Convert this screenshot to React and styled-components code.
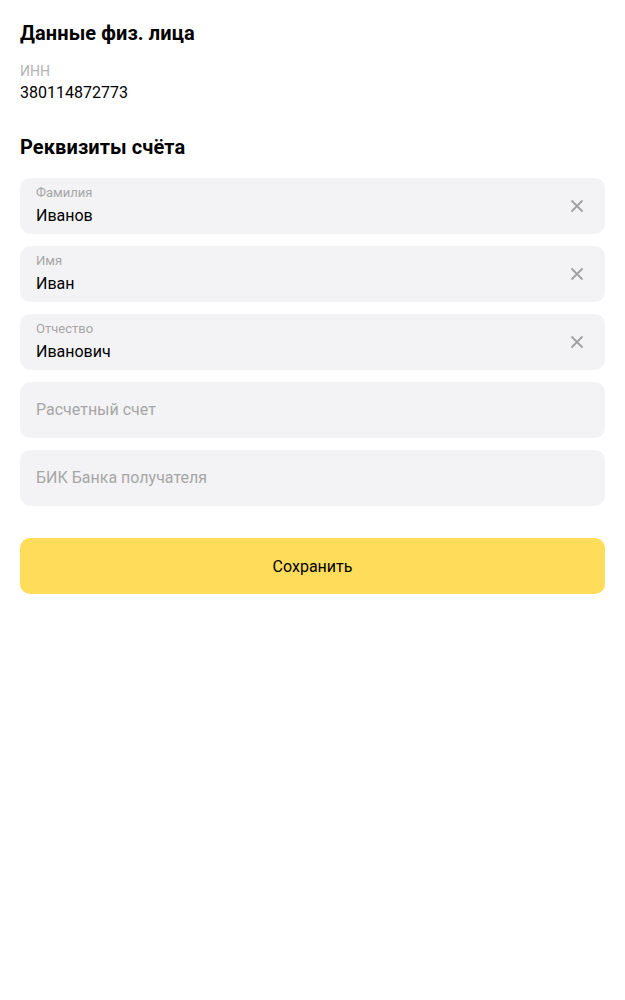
import React from "react";
import styled, { createGlobalStyle } from "styled-components";

const Global = createGlobalStyle`
  html, body { margin: 0; padding: 0; background: #fff; }
  body { font-family: Roboto, "Noto Sans", sans-serif; color: #000; }
  * { box-sizing: border-box; }
`;

const Page = styled.div`
  padding: 18px 20px 20px;
  display: flex;
  flex-direction: column;
`;

const Title = styled.h2`
  margin: 0;
  font-size: 20px;
  line-height: 30px;
  font-weight: 700;
  letter-spacing: 0.1px;
`;

const InfoBlock = styled.div`
  display: flex;
  flex-direction: column;
  margin-top: 14px;
  margin-bottom: 28px;
`;

const InfoLabel = styled.span`
  font-size: 14px;
  line-height: 18px;
  color: #b3b3b3;
`;

const InfoValue = styled.span`
  font-size: 16px;
  line-height: 22px;
  margin-top: 2px;
  color: #000;
`;

const Fields = styled.div`
  display: flex;
  flex-direction: column;
  gap: 12px;
  margin-top: 16px;
`;

const Field = styled.div`
  height: 56px;
  background: #f3f3f5;
  border-radius: 10px;
  display: flex;
  align-items: center;
  padding: 0 16px;
`;

const FieldBody = styled.div`
  flex: 1;
  display: flex;
  flex-direction: column;
`;

const FieldLabel = styled.span`
  font-size: 13px;
  line-height: 14px;
  color: #a6a6a6;
`;

const FieldValue = styled.span`
  font-size: 16px;
  line-height: 22px;
  margin-top: 5px;
  color: #000;
`;

const Placeholder = styled.span`
  font-size: 16px;
  line-height: 22px;
  color: #a6a6a6;
`;

const Clear = styled.button`
  border: 0;
  background: none;
  padding: 0;
  width: 24px;
  height: 24px;
  display: flex;
  align-items: center;
  justify-content: center;
  cursor: pointer;
`;

const SaveButton = styled.button`
  margin-top: 32px;
  height: 56px;
  border: 0;
  border-radius: 10px;
  background: #ffdd5b;
  font-family: inherit;
  font-size: 16px;
  color: #000;
  cursor: pointer;
`;

const X = () => (
  <svg width="14" height="14" viewBox="0 0 14 14">
    <path d="M1.5 1.5 L12.5 12.5 M12.5 1.5 L1.5 12.5" stroke="#a0a0a0" strokeWidth="1.8" strokeLinecap="butt" />
  </svg>
);

const filled = [
  { label: "Фамилия", value: "Иванов" },
  { label: "Имя", value: "Иван" },
  { label: "Отчество", value: "Иванович" },
];

const empty = ["Расчетный счет", "БИК Банка получателя"];

export default function App() {
  return (
    <>
      <Global />
      <Page>
        <Title>Данные физ. лица</Title>
        <InfoBlock>
          <InfoLabel>ИНН</InfoLabel>
          <InfoValue>380114872773</InfoValue>
        </InfoBlock>
        <Title>Реквизиты счёта</Title>
        <Fields>
          {filled.map((f) => (
            <Field key={f.label}>
              <FieldBody>
                <FieldLabel>{f.label}</FieldLabel>
                <FieldValue>{f.value}</FieldValue>
              </FieldBody>
              <Clear aria-label="Очистить">
                <X />
              </Clear>
            </Field>
          ))}
          {empty.map((p) => (
            <Field key={p}>
              <Placeholder>{p}</Placeholder>
            </Field>
          ))}
        </Fields>
        <SaveButton>Сохранить</SaveButton>
      </Page>
    </>
  );
}
